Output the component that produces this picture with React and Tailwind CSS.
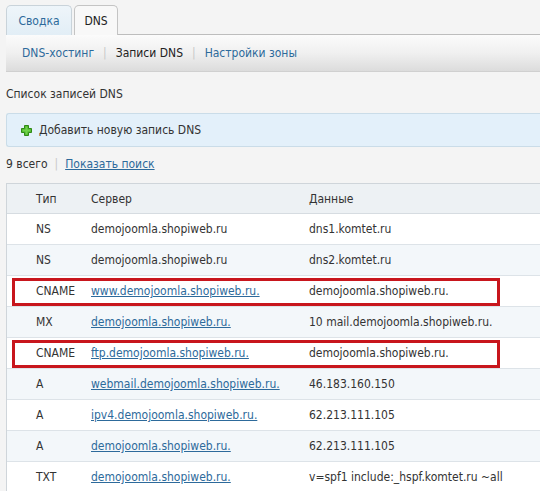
import React from 'react';

const records = [
  { type: 'NS', server: 'demojoomla.shopiweb.ru', data: 'dns1.komtet.ru', link: false },
  { type: 'NS', server: 'demojoomla.shopiweb.ru', data: 'dns2.komtet.ru', link: false },
  { type: 'CNAME', server: 'www.demojoomla.shopiweb.ru.', data: 'demojoomla.shopiweb.ru.', link: true, mark: true },
  { type: 'MX', server: 'demojoomla.shopiweb.ru.', data: '10 mail.demojoomla.shopiweb.ru.', link: true },
  { type: 'CNAME', server: 'ftp.demojoomla.shopiweb.ru.', data: 'demojoomla.shopiweb.ru.', link: true, mark: true },
  { type: 'A', server: 'webmail.demojoomla.shopiweb.ru.', data: '46.183.160.150', link: true },
  { type: 'A', server: 'ipv4.demojoomla.shopiweb.ru.', data: '62.213.111.105', link: true },
  { type: 'A', server: 'demojoomla.shopiweb.ru.', data: '62.213.111.105', link: true },
  { type: 'TXT', server: 'demojoomla.shopiweb.ru.', data: 'v=spf1 include:_hspf.komtet.ru ~all', link: true },
];

function PlusIcon() {
  return (
    <svg width="11" height="11" viewBox="0 0 11 11" className="shrink-0">
      <path d="M3.5 0.5h4v3h3v4h-3v3h-4v-3h-3v-4h3z" fill="#4caf2a" stroke="#2f8a17" strokeWidth="1" />
      <path d="M4.5 1.5h2v3h3v2h-3v3h-2v-3h-3v-2h3z" fill="#6fd34a" />
    </svg>
  );
}

export default function App() {
  return (
    <div
      className="w-[540px] h-[491px] overflow-hidden bg-[#f4f4f4] text-[#333] text-[12px]"
      style={{ fontFamily: '"DejaVu Sans Condensed", "DejaVu Sans", Verdana, sans-serif' }}
    >
      {/* tabs */}
      <div className="flex items-end pl-[6px] pt-[5px] h-[35px]">
        <div className="h-[30px] w-[66px] flex items-center justify-center rounded-t-[5px] border border-b-0 border-[#c9d3da] bg-gradient-to-b from-[#eef5fa] to-[#e2eef6] text-[#2d6a9b]">
          Сводка
        </div>
        <div className="ml-[2px] h-[30px] w-[44px] flex items-center justify-center rounded-t-[5px] border border-b-0 border-[#c4c4c4] bg-[#f8f8f8] text-[#222]">
          DNS
        </div>
        <div className="flex-1 border-b border-[#bdbdbd]" />
      </div>

      {/* sub navigation */}
      <div className="ml-[6px] h-[37px] flex items-center pl-[16px] bg-gradient-to-b from-[#fbfbfb] via-[#f0f0f0] to-[#dcdcdc] border-b border-[#d0d0d0]">
        <span className="text-[#2d6a9b]">DNS-хостинг</span>
        <span className="mx-[9px] text-[#c8c8c8]">|</span>
        <span className="text-[#222]">Записи DNS</span>
        <span className="mx-[9px] text-[#c8c8c8]">|</span>
        <span className="text-[#2d6a9b]">Настройки зоны</span>
      </div>

      <div className="pl-[6px] mt-[14px] h-[16px] leading-[16px]">Список записей DNS</div>

      {/* add box */}
      <div className="ml-[6px] mt-[11px] h-[34px] flex items-center gap-[7px] pl-[14px] bg-[#e3f0fa] border border-r-0 border-[#cadce8] rounded-l-[3px]">
        <PlusIcon />
        <span>Добавить новую запись DNS</span>
      </div>

      <div className="pl-[6px] mt-[9px] h-[16px] flex items-center">
        <span>9 всего</span>
        <span className="mx-[7px] text-[#c8c8c8]">|</span>
        <span className="text-[#2d6a9b] underline">Показать поиск</span>
      </div>

      {/* table */}
      <div className="ml-[6px] mt-[11px] border-l border-t border-[#cfd5da]">
        <div className="h-[30px] flex items-center bg-[#edf1f4] border-b border-[#d6dce1]">
          <div className="w-[84px] pl-[29px]">Тип</div>
          <div className="w-[218px]">Сервер</div>
          <div>Данные</div>
        </div>
        {records.map((r, i) => (
          <div
            key={i}
            className={
              'relative h-[31px] flex items-center border-b border-[#dde3e8] ' +
              (i % 2 === 0 ? 'bg-white' : 'bg-[#f3f7fa]')
            }
          >
            <div className="w-[84px] pl-[29px]">{r.type}</div>
            <div className="w-[218px]">
              {r.link ? (
                <span className="text-[#2d6a9b] underline">{r.server}</span>
              ) : (
                r.server
              )}
            </div>
            <div className="whitespace-nowrap">{r.data}</div>
            {r.mark && (
              <div className="absolute left-[5px] top-[2px] w-[488px] h-[28px] border-[3px] border-[#c8161d]" />
            )}
          </div>
        ))}
      </div>
    </div>
  );
}
